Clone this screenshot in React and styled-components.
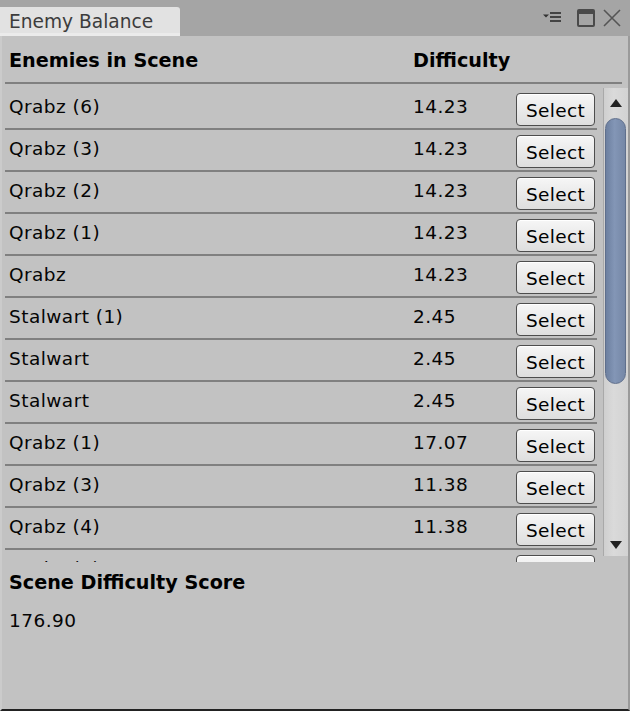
import styled, { createGlobalStyle } from "styled-components";

const GlobalStyle = createGlobalStyle`
  html, body {
    margin: 0;
    background: #c2c2c2;
  }
  body {
    font-family: "DejaVu Sans", Verdana, sans-serif;
  }
`;

const enemies = [
  { name: "Qrabz (6)", score: "14.23" },
  { name: "Qrabz (3)", score: "14.23" },
  { name: "Qrabz (2)", score: "14.23" },
  { name: "Qrabz (1)", score: "14.23" },
  { name: "Qrabz", score: "14.23" },
  { name: "Stalwart (1)", score: "2.45" },
  { name: "Stalwart", score: "2.45" },
  { name: "Stalwart", score: "2.45" },
  { name: "Qrabz (1)", score: "17.07" },
  { name: "Qrabz (3)", score: "11.38" },
  { name: "Qrabz (4)", score: "11.38" },
  { name: "Qrabz (2)", score: "14.23" },
  { name: "Qrabz (5)", score: "14.23" },
];

const Window = styled.div`
  width: 630px;
  height: 711px;
  display: flex;
  flex-direction: column;
  overflow: hidden;
`;

const TabBar = styled.div`
  height: 36px;
  flex-shrink: 0;
  background: #a5a5a5;
  display: flex;
  align-items: flex-end;
  justify-content: space-between;
`;

const Tab = styled.div`
  width: 171px;
  height: 22px;
  padding: 4px 0 0 9px;
  background: #e2e2e2;
  border-bottom: 3px solid #ebebeb;
  border-top-right-radius: 3px;
  color: #3c3c3c;
  font-size: 18.6px;
  line-height: 22px;
  white-space: nowrap;
`;

const WinIcons = styled.div`
  align-self: stretch;
  display: flex;
  align-items: flex-start;
  gap: 8px;
  padding: 8px 9px 0 0;
`;

const Panel = styled.div`
  flex: 1;
  display: flex;
  flex-direction: column;
  background: #c2c2c2;
  border-left: 2px solid #cbcbcb;
  border-right: 2px solid #9a9a9a;
  border-bottom: 2px solid #222;
`;

const HeaderRow = styled.div`
  height: 48px;
  margin: 0 6px 0 3px;
  border-bottom: 2px solid #808080;
  display: grid;
  grid-template-columns: 404px 1fr;
  align-items: center;
  padding-left: 4px;
  padding-top: 2px;
  box-sizing: border-box;
`;

const HeadCell = styled.div`
  font-weight: bold;
  font-size: 19.2px;
  color: #000;
`;

const Body = styled.div`
  display: flex;
  height: 474px;
  margin-top: 4px;
  flex-shrink: 0;
`;

const List = styled.div`
  width: 593px;
  margin-left: 3px;
  overflow: hidden;
`;

const Row = styled.div`
  height: 40px;
  border-bottom: 2px solid #808080;
  display: grid;
  grid-template-columns: 404px 103px 79px;
  padding-left: 4px;
  align-items: center;
  font-size: 18.5px;
  letter-spacing: 0.45px;
  color: #050505;
`;

const Cell = styled.div`
  white-space: nowrap;
  padding-bottom: 4px;
`;

const SelectButton = styled.button`
  align-self: end;
  height: 33px;
  width: 79px;
  margin-bottom: 2px;
  padding: 2px 0 0;
  border: 1px solid #4d4d4d;
  border-radius: 4px;
  background: linear-gradient(#f6f6f6, #dedede);
  box-shadow: inset 0 1px 0 #ffffff;
  font-family: "DejaVu Sans", Verdana, sans-serif;
  font-size: 18.5px;
  letter-spacing: 0.3px;
  color: #000;
`;

const ScrollBar = styled.div`
  width: 25px;
  height: 468px;
  margin-left: 6px;
  box-sizing: border-box;
  border-left: 1px solid #a9a9a9;
  background: linear-gradient(90deg, #cfcfcf, #dadada 40%, #d2d2d2);
  display: flex;
  flex-direction: column;
  align-items: center;
`;

const Arrow = styled.div`
  height: ${(p) => p.$h}px;
  flex-shrink: 0;
  display: flex;
  align-items: center;
  justify-content: center;
`;

const Track = styled.div`
  flex: 1;
  width: 100%;
  padding-left: 1px;
  box-sizing: border-box;
`;

const Thumb = styled.div`
  width: 21px;
  height: 266px;
  box-sizing: border-box;
  border: 1px solid #5f6f8c;
  border-radius: 11px;
  background: linear-gradient(90deg, #6d80a0, #8396b6 45%, #7587a6);
`;

const Footer = styled.div`
  padding: 9px 0 0 7px;
`;

const FooterTitle = styled.div`
  font-weight: bold;
  font-size: 19.2px;
  line-height: 24px;
  color: #000;
`;

const FooterValue = styled.div`
  margin-top: 14px;
  font-size: 18.5px;
  letter-spacing: 0.45px;
  line-height: 24px;
  color: #050505;
`;

function MenuIcon() {
  return (
    <svg width="26" height="20" viewBox="0 0 26 20">
      <path d="M0 6.5 L6 6.5 L3 9.5 Z" fill="#333" />
      <rect x="7" y="4" width="11" height="2" fill="#444" />
      <rect x="7" y="8" width="11" height="2" fill="#444" />
      <rect x="7" y="12" width="11" height="2" fill="#444" />
    </svg>
  );
}

function MaxIcon() {
  return (
    <svg width="18" height="20" viewBox="0 0 18 20">
      <rect x="1" y="2" width="16" height="16" rx="1" fill="none" stroke="#4a4a4a" strokeWidth="2" />
      <rect x="1" y="2" width="16" height="4" fill="#4a4a4a" />
    </svg>
  );
}

function CloseIcon() {
  return (
    <svg width="18" height="20" viewBox="0 0 18 20">
      <path d="M1 2 L17 18 M17 2 L1 18" stroke="#555" strokeWidth="1.6" />
    </svg>
  );
}

export default function App() {
  return (
    <>
      <GlobalStyle />
      <Window>
        <TabBar>
          <Tab>Enemy Balance</Tab>
          <WinIcons>
            <MenuIcon />
            <MaxIcon />
            <CloseIcon />
          </WinIcons>
        </TabBar>
        <Panel>
          <HeaderRow>
            <HeadCell>Enemies in Scene</HeadCell>
            <HeadCell>Difficulty</HeadCell>
          </HeaderRow>
          <Body>
            <List>
              {enemies.map((e, i) => (
                <Row key={i}>
                  <Cell>{e.name}</Cell>
                  <Cell>{e.score}</Cell>
                  <SelectButton>Select</SelectButton>
                </Row>
              ))}
            </List>
            <ScrollBar>
              <Arrow $h={30}>
                <svg width="12" height="8" viewBox="0 0 12 8">
                  <path d="M0 8 L6 0 L12 8 Z" fill="#222" />
                </svg>
              </Arrow>
              <Track>
                <Thumb />
              </Track>
              <Arrow $h={22}>
                <svg width="12" height="8" viewBox="0 0 12 8">
                  <path d="M0 0 L12 0 L6 8 Z" fill="#222" />
                </svg>
              </Arrow>
            </ScrollBar>
          </Body>
          <Footer>
            <FooterTitle>Scene Difficulty Score</FooterTitle>
            <FooterValue>176.90</FooterValue>
          </Footer>
        </Panel>
      </Window>
    </>
  );
}
